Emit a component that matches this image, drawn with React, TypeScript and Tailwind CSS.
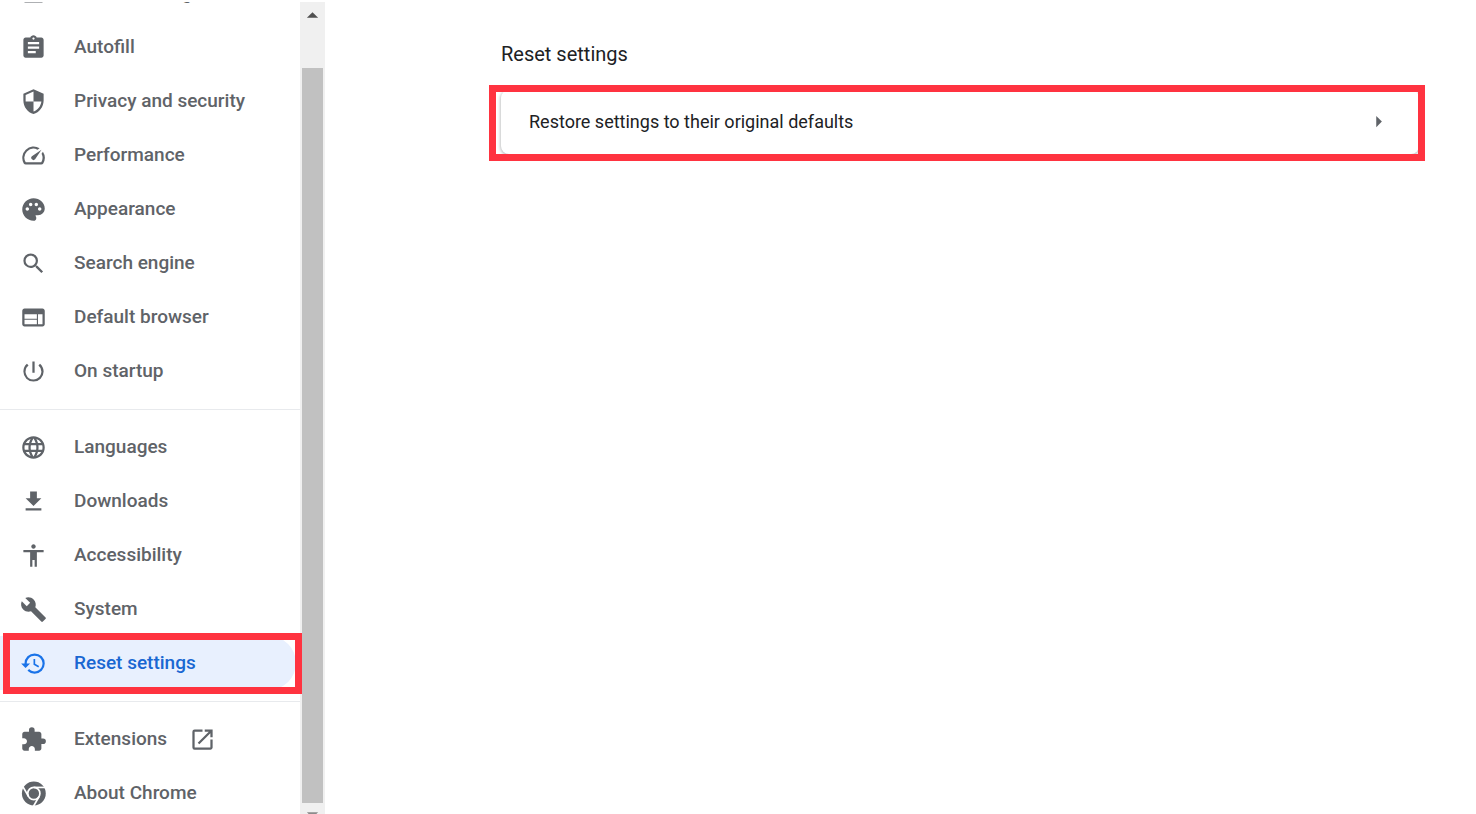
import type { ReactNode } from "react";
import {
  MdAccessibility,
  MdArrowDropDown,
  MdArrowDropUp,
  MdArrowRight,
  MdAssignment,
  MdBuild,
  MdExtension,
  MdFileDownload,
  MdHistory,
  MdLanguage,
  MdOpenInNew,
  MdPalette,
  MdPerson,
  MdPowerSettingsNew,
  MdSearch,
  MdSecurity,
  MdSpeed,
  MdWeb,
} from "react-icons/md";

interface IconProps {
  size?: number;
  className?: string;
}

interface MenuItem {
  label: string;
  icon: (props: IconProps) => ReactNode;
  active?: boolean;
  external?: boolean;
}

function ChromeIcon({ size = 24, className }: IconProps) {
  return (
    <svg width={size} height={size} viewBox="0 0 24 24" className={className}>
      <circle cx="12.3" cy="12" r="10.6" fill="currentColor" />
      <g stroke="#fff" strokeWidth="1.5" fill="none">
        <circle cx="12.3" cy="12" r="5.4" />
        <path d="M12.3 6.6H24" />
        <path d="M12.3 6.6H24" transform="rotate(120 12.3 12)" />
        <path d="M12.3 6.6H24" transform="rotate(240 12.3 12)" />
      </g>
    </svg>
  );
}

const groups: MenuItem[][] = [
  [
    { label: "You and Google", icon: MdPerson },
    { label: "Autofill", icon: MdAssignment },
    { label: "Privacy and security", icon: MdSecurity },
    { label: "Performance", icon: MdSpeed },
    { label: "Appearance", icon: MdPalette },
    { label: "Search engine", icon: MdSearch },
    { label: "Default browser", icon: MdWeb },
    { label: "On startup", icon: MdPowerSettingsNew },
  ],
  [
    { label: "Languages", icon: MdLanguage },
    { label: "Downloads", icon: MdFileDownload },
    { label: "Accessibility", icon: MdAccessibility },
    { label: "System", icon: MdBuild },
    { label: "Reset settings", icon: MdHistory, active: true },
  ],
  [
    { label: "Extensions", icon: MdExtension, external: true },
    { label: "About Chrome", icon: ChromeIcon },
  ],
];

function MenuLink({ label, icon: Icon, active, external }: MenuItem) {
  return (
    <li className="relative">
      <a
        href="#"
        aria-current={active ? "page" : undefined}
        className={`flex h-[54px] items-center pl-5 text-[19px] font-medium ${
          active
            ? "mr-1 rounded-r-full bg-[#e8f0fe] text-[#1967d2]"
            : "text-[#5f6368]"
        }`}
      >
        <Icon
          size={27}
          className={`mr-[27px] shrink-0 ${active ? "text-[#1a73e8]" : ""}`}
        />
        <span>{label}</span>
        {external && <MdOpenInNew size={27} className="ml-[22px]" />}
      </a>
      {active && (
        <Highlight className="-top-[3px] -right-0.5 -bottom-1 left-[3px]" />
      )}
    </li>
  );
}

/* Red marker frame drawn over its parent */
function Highlight({ className }: { className: string }) {
  return (
    <div
      className={`pointer-events-none absolute z-10 border-[7px] border-[#ff3340] ${className}`}
    />
  );
}

function Section({ children }: { children: ReactNode }) {
  return (
    <ul className="mb-2.5 border-b border-[#e8eaed] pb-[11px] last:mb-0 last:border-b-0 last:pb-0">
      {children}
    </ul>
  );
}

function ScrollBar() {
  return (
    <div className="flex w-[25px] shrink-0 flex-col items-center bg-[#f0f0f0]">
      <div className="flex h-[66px] shrink-0 justify-center">
        <MdArrowDropUp size={27} className="text-[#505050]" />
      </div>
      <div className="w-[21px] flex-1 bg-[#c1c1c1]" />
      <div className="flex h-[11px] shrink-0 justify-center overflow-hidden">
        <MdArrowDropDown size={27} className="-mt-0.5 shrink-0 text-[#8b8b8b]" />
      </div>
    </div>
  );
}

export default function App() {
  return (
    <div className="flex h-screen overflow-hidden bg-white pt-0.5 font-['Roboto',sans-serif]">
      <aside className="flex shrink-0">
        <nav className="w-[300px] [clip-path:inset(0_-2px_0_0)]">
          <div className="-mt-9">
            {groups.map((items) => (
              <Section key={items[0].label}>
                {items.map((item) => (
                  <MenuLink key={item.label} {...item} />
                ))}
              </Section>
            ))}
          </div>
        </nav>
        <ScrollBar />
      </aside>

      <main className="flex-1 pt-[38px] pr-[57px] pl-44">
        <h2 className="text-xl leading-7 text-[#202124]">Reset settings</h2>
        <div className="relative mt-[22px]">
          <button
            type="button"
            className="flex h-16 w-full items-center justify-between rounded-lg bg-white pr-[27px] pb-px pl-7 text-left text-lg text-[#202124] shadow-[0_1px_3px_1px_rgba(60,64,67,0.3)]"
          >
            <span>Restore settings to their original defaults</span>
            <MdArrowRight size={27} className="text-[#5f6368]" />
          </button>
          <Highlight className="-top-[5px] -right-1.5 -bottom-[7px] -left-3" />
        </div>
      </main>
    </div>
  );
}
